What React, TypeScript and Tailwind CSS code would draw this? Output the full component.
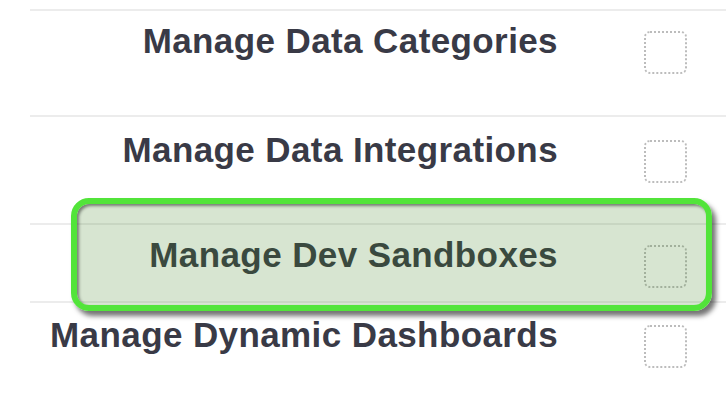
import React from "react";

const rows = [
  { label: "Manage Data Categories", h: "h-[106px]", pt: "pt-[12px]" },
  { label: "Manage Data Integrations", h: "h-[108px]", pt: "pt-[15px]" },
  { label: "Manage Dev Sandboxes", h: "h-[78px]", pt: "pt-[12px]" },
  { label: "Manage Dynamic Dashboards", h: "h-[101px]", pt: "pt-[14px]" },
];

export default function App() {
  return (
    <div
      className="relative w-[726px] h-[402px] overflow-hidden bg-white pt-[9px]"
      style={{ fontFamily: '"Liberation Sans", Arial, sans-serif' }}
    >
      <div className="ml-[30px]">
        {rows.map((row) => (
          <div
            key={row.label}
            className={`flex justify-end items-start border-t-2 border-[#ececec] pr-[39px] ${row.h} ${row.pt}`}
          >
            <span className="text-[35px] leading-[35px] font-bold tracking-[0.4px] text-[#393a46] whitespace-nowrap">
              {row.label}
            </span>
            <div className="ml-[86px] mt-[8px] w-[43px] h-[43px] rounded-md border-[2px] border-dotted border-[#bcbcbc]" />
          </div>
        ))}
      </div>

      {/* highlight annotation over the selected row */}
      <div className="absolute left-[71px] top-[198px] w-[641px] h-[113px] rounded-[18px] border-[6px] border-[#52e43a] bg-[rgba(67,133,36,0.21)] shadow-[4px_5px_5px_rgba(0,0,0,0.55),inset_2px_2px_3px_rgba(0,0,0,0.45)]" />
    </div>
  );
}
